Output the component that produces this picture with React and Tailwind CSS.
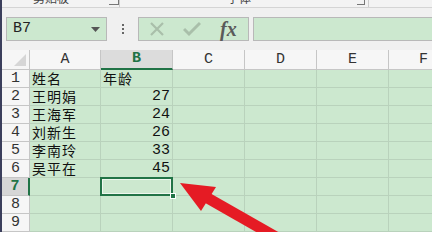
import React from "react";

const CN = { fontFamily: '"Noto Sans CJK SC", sans-serif' };
const LAT = { fontFamily: '"Liberation Mono", "Noto Sans CJK SC", monospace' };

const rows = [
  ["姓名", "年龄"],
  ["王明娟", "27"],
  ["王海军", "24"],
  ["刘新生", "26"],
  ["李南玲", "33"],
  ["吴平在", "45"],
  ["", ""],
  ["", ""],
  ["", ""],
];

const cols = [
  { l: "A", w: "w-[71px]" },
  { l: "B", w: "w-[72px]" },
  { l: "C", w: "w-[72px]" },
  { l: "D", w: "w-[72px]" },
  { l: "E", w: "w-[72px]" },
];

function Ribbon() {
  return (
    <div className="h-[8px] flex items-start border-b border-[#d4d4d4] bg-[#f3f3f3] overflow-hidden">
      <div className="w-[31px]" />
      <div className="w-[76px] text-[12px] leading-[12px] text-[#444] mt-[-8px]" style={CN}>剪贴板</div>
      <div className="w-[10px] h-[5px] border-r border-b border-[#777]" />
      <div className="w-[1px] h-[7px] bg-[#ccc]" />
      <div className="w-[107px]" />
      <div className="w-[130px] text-[12px] leading-[12px] text-[#444] mt-[-8px]" style={CN}>字体</div>
      <div className="w-[8px] h-[5px] border-r border-b border-[#777]" />
      <div className="w-[1px] h-[7px] bg-[#ccc] ml-[3px]" />
    </div>
  );
}

function FormulaBar() {
  return (
    <div className="h-[42px] bg-[#f0f0f0] flex items-start pt-[9px]">
      <div className="ml-[4px] w-[101px] h-[24px] border border-[#b8b8b8] bg-[#cce8cf] flex items-center justify-between pl-[6px] pr-[6px]">
        <span className="text-[15px] leading-[18px] text-[#222]" style={LAT}>B7</span>
        <svg width="9" height="5" viewBox="0 0 9 5"><path d="M0 0H9L4.5 5Z" fill="#555" /></svg>
      </div>
      <div className="w-[31px] h-[24px] flex flex-col items-center justify-center gap-[2px]">
        <span className="w-[2px] h-[2px] bg-[#666]" />
        <span className="w-[2px] h-[2px] bg-[#666]" />
        <span className="w-[2px] h-[2px] bg-[#666]" />
      </div>
      <div className="w-[111px] h-[24px] border border-[#b8b8b8] bg-[#cce8cf] flex items-center">
        <svg className="ml-[10px]" width="16" height="16" viewBox="0 0 16 16">
          <path d="M2 2L14 14M14 2L2 14" stroke="#a9bfaa" strokeWidth="2.2" />
        </svg>
        <svg className="ml-[18px]" width="18" height="16" viewBox="0 0 18 16">
          <path d="M1 8L6 13L17 2" stroke="#a9bfaa" strokeWidth="3" fill="none" />
        </svg>
        <span className="ml-[19px] text-[20px] leading-none italic font-bold text-[#5a5a5a]" style={{ fontFamily: '"Liberation Serif", serif' }}>fx</span>
      </div>
      <div className="ml-[4px] flex-1 h-[24px] border border-[#b8b8b8] border-r-0 bg-[#cce8cf]" />
    </div>
  );
}

function Grid() {
  return (
    <div className="flex flex-col">
      <div className="flex h-[20px] bg-[#f6f6f6]">
        <div className="w-[28px] h-[20px] border-r border-b border-[#c6c6c6] flex items-end justify-end pr-[3px] pb-[3px]">
          <svg width="12" height="12" viewBox="0 0 12 12"><path d="M12 0V12H0Z" fill="#d6d6d6" /></svg>
        </div>
        {cols.map((c) =>
          c.l === "B" ? (
            <div key={c.l} className={`${c.w} h-[20px] bg-[#dcdcdc] border-r border-[#c6c6c6] border-b-2 border-b-[#217346] flex items-center justify-center text-[15px] leading-[18px] font-bold text-[#217346]`} style={LAT}>
              {c.l}
            </div>
          ) : (
            <div key={c.l} className={`${c.w} h-[20px] border-r border-b border-[#c6c6c6] flex items-center justify-center text-[15px] leading-[18px] text-[#333]`} style={LAT}>
              {c.l}
            </div>
          )
        )}
        <div className="flex-1 h-[20px] border-b border-[#c6c6c6] flex items-center pl-[30px] text-[15px] leading-[18px] text-[#333]" style={LAT}>F</div>
      </div>
      {rows.map((r, i) => {
        const sel = i === 6;
        return (
          <div key={i} className="flex h-[18px]">
            {sel ? (
              <div className="w-[28px] h-[18px] bg-[#d6d6d6] border-r-2 border-[#217346] border-b border-b-[#c6c6c6] flex items-center justify-center text-[15px] leading-[17px] font-bold text-[#217346]" style={LAT}>
                {i + 1}
              </div>
            ) : (
              <div className="w-[28px] h-[18px] bg-[#f6f6f6] border-r border-b border-[#c6c6c6] flex items-center justify-center text-[15px] leading-[17px] text-[#333]" style={LAT}>
                {i + 1}
              </div>
            )}
            <div className="w-[71px] h-[18px] bg-[#cce8cf] border-r border-b border-[#b9d2bc] flex items-center pl-[2px] text-[14px] leading-[17px] tracking-[1px] text-[#111]" style={CN}>
              {r[0]}
            </div>
            {sel ? (
              <div className="relative w-[72px] h-[18px] bg-[#cce8cf] border-r border-b border-[#b9d2bc]">
                <div className="absolute left-[-1px] top-[-1px] w-[73px] h-[19px] border-2 border-[#217346]">
                  <div className="w-full h-full border border-[#eef6ee]" />
                </div>
                <div className="absolute right-[-4px] bottom-[-4px] w-[6px] h-[6px] bg-[#217346] border border-white" />
              </div>
            ) : (
              <div className={`w-[72px] h-[18px] bg-[#cce8cf] border-r border-b border-[#b9d2bc] flex items-center leading-[17px] text-[#111] ${i === 0 ? "pl-[2px] text-[14px] tracking-[1px]" : "justify-end pr-[2px] text-[15px]"}`} style={i === 0 ? CN : LAT}>
                {r[1]}
              </div>
            )}
            <div className="w-[72px] h-[18px] bg-[#cce8cf] border-r border-b border-[#b9d2bc]" />
            <div className="w-[72px] h-[18px] bg-[#cce8cf] border-r border-b border-[#b9d2bc]" />
            <div className="w-[72px] h-[18px] bg-[#cce8cf] border-r border-b border-[#b9d2bc]" />
            <div className="flex-1 h-[18px] bg-[#cce8cf] border-b border-[#b9d2bc]" />
          </div>
        );
      })}
    </div>
  );
}

export default function App() {
  return (
    <div className="relative w-[432px] h-[232px] overflow-hidden flex bg-[#f0f0f0]">
      <div className="w-[2px] h-full bg-[#3b3f5c]" />
      <div className="flex-1 flex flex-col">
        <Ribbon />
        <FormulaBar />
        <Grid />
      </div>
      <svg className="absolute left-0 top-0" width="432" height="232" viewBox="0 0 432 232">
        <line x1="204" y1="196" x2="290" y2="245" stroke="#e51b24" strokeWidth="11" />
        <polygon points="180,183 216,187 201,211" fill="#e51b24" />
      </svg>
    </div>
  );
}
